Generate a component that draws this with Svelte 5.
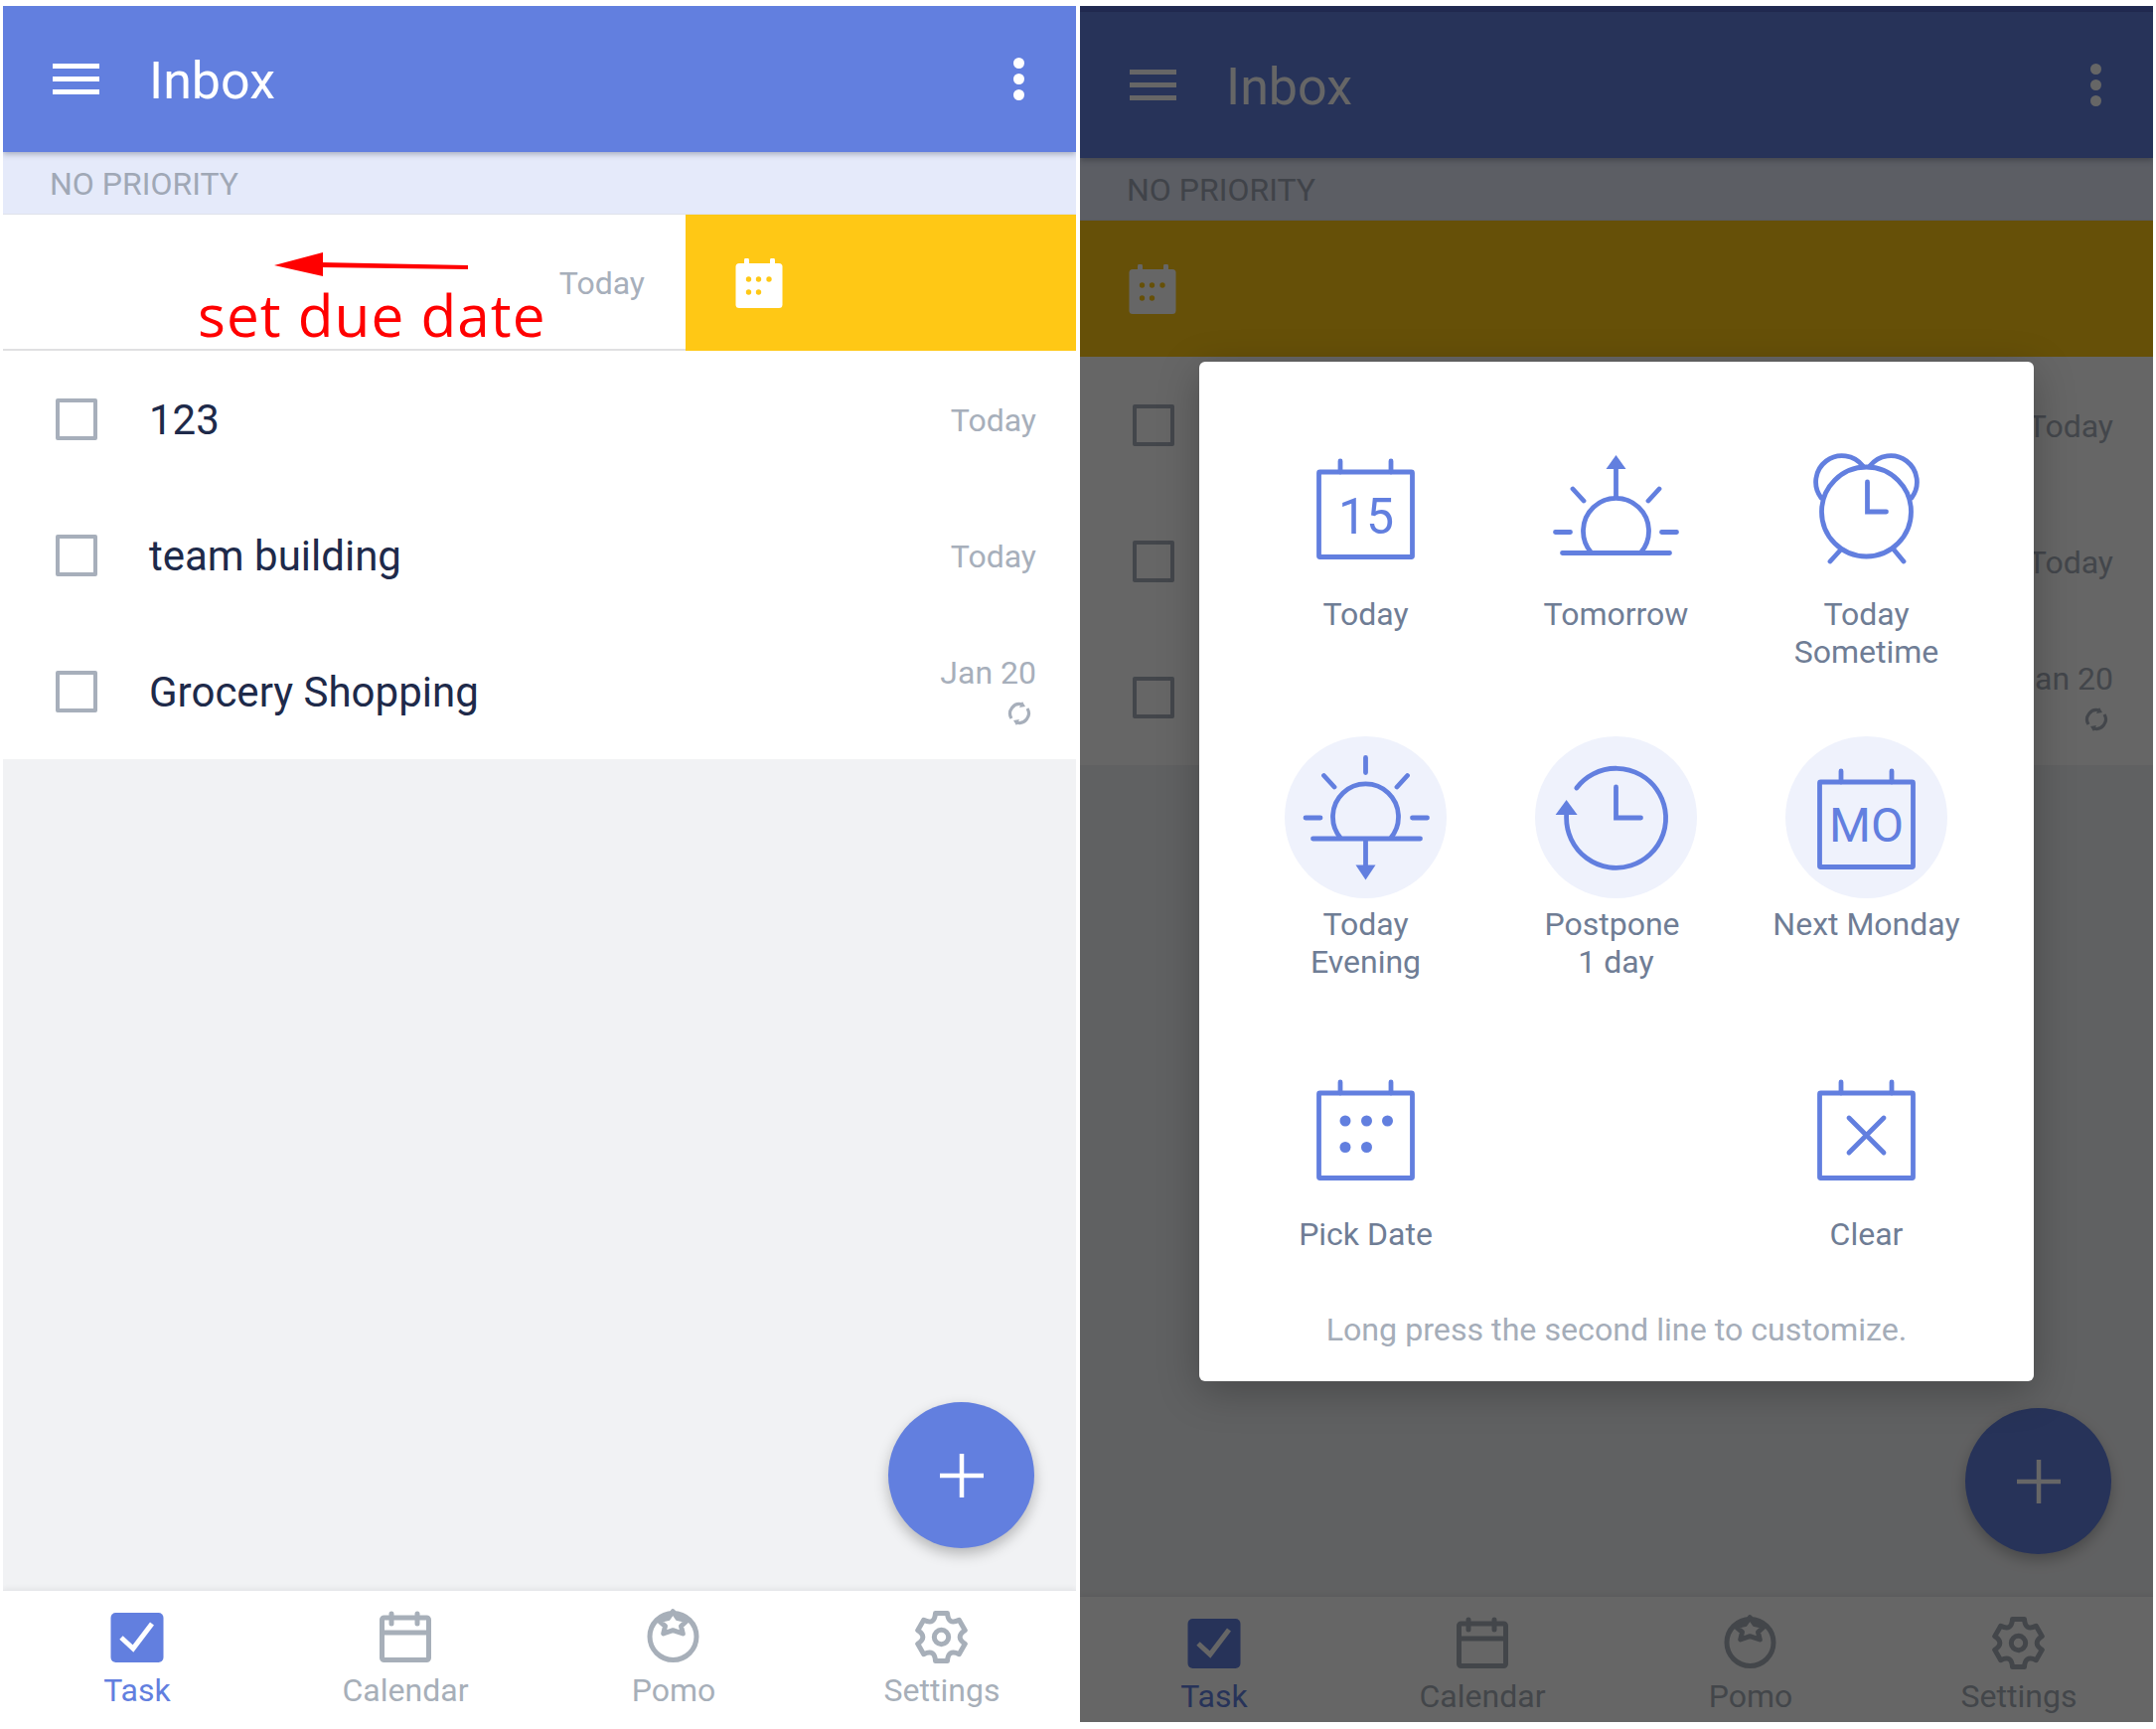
<script lang="ts">
  const tasks = [
    { name: '123', date: 'Today', repeat: false },
    { name: 'team building', date: 'Today', repeat: false },
    { name: 'Grocery Shopping', date: 'Jan 20', repeat: true },
  ]
  const tabs = ['Task', 'Calendar', 'Pomo', 'Settings']
  const options = [
    { id: 'today', lines: ['Today'] },
    { id: 'tomorrow', lines: ['Tomorrow'] },
    { id: 'sometime', lines: ['Today', 'Sometime'] },
    { id: 'evening', lines: ['Today', 'Evening'], ring: true },
    { id: 'postpone', lines: ['Postpone ', '1 day'], ring: true },
    { id: 'monday', lines: ['Next Monday'], ring: true },
    { id: 'pick', lines: ['Pick Date'] },
    { id: 'none', lines: [] },
    { id: 'clear', lines: ['Clear'] },
  ]

  // six rounded teeth around the settings cog
  function gearPath(cx: number, cy: number) {
    const pt = (deg: number, r: number) => {
      const a = (deg * Math.PI) / 180
      return `${(cx + r * Math.cos(a)).toFixed(1)} ${(cy + r * Math.sin(a)).toFixed(1)}`
    }
    let d = ''
    for (let i = 0; i < 6; i++) {
      const a = -90 + i * 60
      d += `${i ? 'L' : 'M'}${pt(a - 14, 24.8)} L${pt(a + 14, 24.8)} Q${pt(a + 30, 13.5)} ${pt(a + 46, 24.8)} `
    }
    return d + 'Z'
  }
</script>

{#snippet calFrame()}
  <rect x="34.5" y="46" width="94" height="85.5" rx="1" />
  <path d="M56 35v11M107 35v11" />
{/snippet}

{#snippet dialogIcon(id: string)}
  <svg class="opt-svg" viewBox="0 0 163 163" width="163" height="163">
    {#if id === 'today'}
      {@render calFrame()}
      <text class="cal-num" x="82" y="107.5">15</text>
    {:else if id === 'tomorrow'}
      <path d="M27.5 127.5h108M56.5 127A33 33 0 1 1 106.5 127M81.5 72V40M20.5 106.5h15M127.5 106.5h15M38 63l11 12M125 63l-11 12" />
      <path class="solid" d="M81.5 29l10 14h-20z" />
    {:else if id === 'sometime'}
      <circle cx="81.5" cy="86" r="45" />
      <path d="M36 72A26 26 0 0 1 78 40M127 72A26 26 0 0 0 85 40M55 125L45 136M109 124l10 12M82.5 56v30h19" />
    {:else if id === 'evening'}
      <path d="M28.5 103h108M56.5 102.5A33 33 0 1 1 106.5 102.5M81.5 21.5v15M81.5 103v28M21 82h15M128.5 82h15M39.5 39.5L50 51M123.5 39.5L113 51" />
      <path class="solid" d="M71.5 129.5h20l-10 15z" />
    {:else if id === 'postpone'}
      <path d="M41.8 52A50 50 0 1 1 31.6 82v-5M81.5 51v31h25" />
      <path class="solid" d="M31.6 64l11 15h-22z" />
    {:else if id === 'monday'}
      {@render calFrame()}
      <text class="cal-num mo" x="81.5" y="106">MO</text>
    {:else if id === 'pick'}
      {@render calFrame()}
      <g class="solid">
        <circle cx="61" cy="74" r="5.5" /><circle cx="82.5" cy="74" r="5.5" /><circle cx="103.5" cy="74" r="5.5" />
        <circle cx="61" cy="100.5" r="5.5" /><circle cx="82.5" cy="100.5" r="5.5" />
      </g>
    {:else if id === 'clear'}
      {@render calFrame()}
      <path d="M64 71l35 35M99 71l-35 35" />
    {/if}
  </svg>
{/snippet}

{#snippet tabIcon(name: string)}
  <svg class="tab-svg" viewBox="0 -4 54 58" width="54" height="58">
    {#if name === 'Task'}
      <rect class="task-box" x="0.5" y="2" width="53" height="50" rx="5" />
      <path class="task-check" d="M11 27l12 11 19-25" />
    {:else if name === 'Calendar'}
      <rect x="3.5" y="7" width="47" height="42.5" rx="2" />
      <path d="M3.5 22h47M13 3v10M39 3v10" />
    {:else if name === 'Pomo'}
      <circle cx="26.5" cy="26" r="23.5" />
      <path class="star" d="M26.3 0.7L31 7.5L40.7 9.7L34.5 15.5L36.3 23L26.3 19.7L16.7 23L18.5 15.5L11.7 9.7L21.5 7.5Z" />
    {:else}
      <path d={gearPath(26.5, 26.5)} />
      <circle cx="26.5" cy="26.5" r="7.2" />
    {/if}
  </svg>
{/snippet}

{#snippet screen(dim: boolean)}
  <section class="screen" class:dim>
    {#if dim}<div class="status"></div>{/if}
    <header class="bar">
      <div class="burger"><span></span><span></span><span></span></div>
      <h1>Inbox</h1>
      <div class="dots"><span></span><span></span><span></span></div>
    </header>
    <div class="section-head">NO PRIORITY</div>

    <div class="swipe-row">
      {#if !dim}
        <div class="swipe-rest">
          <span class="date">Today</span>
          <svg class="annot-arrow" viewBox="0 0 200 30" width="200" height="30">
            <path d="M0 13L49 0V24Z" fill="#ff0000" />
            <path d="M45 10L195 13V17L45 15Z" fill="#ff0000" />
          </svg>
          <span class="annot-text">set due date</span>
        </div>
      {/if}
      <div class="swipe-action">
        <svg viewBox="0 0 48 50" width="48" height="50">
          <path class="tick" d="M11.5 2v8M37.5 2v8" />
          <rect x="0.5" y="5" width="47" height="45" rx="3.5" fill="#fff" />
          <g fill="#ffc815">
            <circle cx="13.5" cy="21" r="2.7" /><circle cx="23.5" cy="21" r="2.7" /><circle cx="34" cy="21" r="2.7" />
            <circle cx="13.5" cy="34" r="2.7" /><circle cx="23.5" cy="34" r="2.7" />
          </g>
        </svg>
      </div>
    </div>

    <main class="list">
      {#each tasks as t}
        <div class="row">
          <span class="check"></span>
          <span class="name">{t.name}</span>
          <div class="meta" class:two={t.repeat}>
            <span class="date">{t.date}</span>
            {#if t.repeat}
              <svg class="repeat" viewBox="0 0 24 24" width="24" height="24">
                <path d="M4 17A9.5 9.5 0 0 1 15 3M20 7A9.5 9.5 0 0 1 9 21" />
                <path class="repeat-head" d="M15 0l3 5-6 1zM9 24l-3-5 6-1z" />
              </svg>
            {/if}
          </div>
        </div>
      {/each}
      <button class="fab" aria-label="Add task">
        <svg viewBox="0 0 44 44" width="44" height="44"><path d="M22 0v44M0 22h44" /></svg>
      </button>
    </main>

    <nav class="tabs">
      {#each tabs as tab, i}
        <div class="tab" class:active={i === 0}>
          {@render tabIcon(tab)}
          <span>{tab}</span>
        </div>
      {/each}
    </nav>

    {#if dim}
      <div class="scrim"></div>
      <div class="dialog">
        <div class="grid">
          {#each options as o}
            <div class="opt">
              {#if o.lines.length}
                <div class="opt-icon" class:ring={o.ring}>{@render dialogIcon(o.id)}</div>
                <div class="opt-label">
                  {#each o.lines as line}<div class="line">{line}</div>{/each}
                </div>
              {/if}
            </div>
          {/each}
        </div>
        <p class="hint">Long press the second line to customize.</p>
      </div>
    {/if}
  </section>
{/snippet}

<div class="page">
  {@render screen(false)}
  {@render screen(true)}
</div>

<style>
  :global(body) { margin: 0; background: #fff; }
  .page {
    display: flex; gap: 4px; padding: 6px 3px 0; height: 1740px; box-sizing: border-box;
    font-family: Roboto, "Liberation Sans", sans-serif;
  }
  .screen {
    position: relative; width: 1080px; height: 1728px; overflow: hidden;
    display: flex; flex-direction: column; background: #f1f2f4;
  }
  .screen.dim { height: 1727px; }
  .status { height: 6px; background: #556bcd; flex-shrink: 0; }

  .bar {
    position: relative; z-index: 1; height: 147px; flex-shrink: 0; display: flex; align-items: center;
    padding: 0 52px 0 50px; background: #627fdf; color: #fff;
    box-shadow: 0 2px 6px rgba(40, 45, 70, .35);
  }
  .burger { display: flex; flex-direction: column; gap: 8px; width: 47px; }
  .burger span { height: 5px; background: #fff; }
  h1 { flex: 1; margin: 4px 0 0 50px; font-size: 52px; font-weight: 400; line-height: 60px; }
  .dots { display: flex; flex-direction: column; gap: 5px; }
  .dots span { width: 11px; height: 11px; border-radius: 50%; background: #fff; }

  .section-head {
    height: 63px; flex-shrink: 0; display: flex; align-items: center; padding: 2px 0 0 47px; box-sizing: border-box;
    background: #e5eafa; border-bottom: 1px solid #dfe2ea;
    font-size: 32px; color: #a0a8b6;
  }

  .swipe-row { display: flex; height: 137px; flex-shrink: 0; }
  .swipe-rest {
    position: relative; width: 687px; box-sizing: border-box; padding: 3px 41px 0 0;
    display: flex; align-items: center; justify-content: flex-end;
    background: #fff; border-bottom: 2px solid #e0e0e2;
  }
  .swipe-action { flex: 1; display: flex; align-items: center; padding-left: 50px; background: #ffc815; height: 137px; }
  .dim .swipe-action { padding-left: 49px; }
  .tick { stroke: #fff; stroke-width: 5; stroke-linecap: round; fill: none; }
  .annot-arrow { position: absolute; left: 273px; top: 38px; }
  .annot-text {
    position: absolute; left: 196px; top: 60px; font-family: "Open Sans", sans-serif;
    font-size: 58.5px; line-height: 80px; letter-spacing: 1px; color: #ff0000;
  }

  .list { position: relative; flex: 1; }
  .row {
    display: flex; align-items: center; height: 137px; padding: 0 40px 0 53px;
    background: #fff;
  }
  .check { width: 42px; height: 42px; box-sizing: border-box; border: 4px solid #a7afbb; border-radius: 2px; margin-right: 52px; }
  .name { flex: 1; padding-top: 2px; font-size: 42px; color: #1e2a4a; }
  .meta { display: flex; flex-direction: column; align-items: flex-end; gap: 10px; margin-top: 3px; }
  .meta.two { margin-top: -3px; }
  .date { font-size: 32px; line-height: 38px; color: #a7afbb; }
  .repeat { margin-right: 5px; }
  .repeat path { fill: none; stroke: #a7afbb; stroke-width: 3.2; }
  .repeat path.repeat-head { fill: #a7afbb; stroke: none; }

  .fab {
    position: absolute; right: 42px; bottom: 42px; width: 147px; height: 147px; padding: 0;
    display: flex; align-items: center; justify-content: center;
    border: 0; border-radius: 50%; background: #627fdf;
    box-shadow: 0 6px 14px rgba(0, 0, 0, .25);
  }
  .fab path { stroke: #fff; stroke-width: 4.5; fill: none; }

  .tabs {
    position: relative; height: 134px; flex-shrink: 0; display: grid; grid-template-columns: repeat(4, 1fr);
    background: #fff; border-top: 1px solid #e6e7ea; box-sizing: border-box;
    box-shadow: 0 -2px 5px rgba(0, 0, 0, .05);
  }
  .dim .tabs { height: 127px; }
  .tab { display: flex; flex-direction: column; align-items: center; padding-top: 16px; font-size: 32px; color: #a7afb9; }
  .tab span { line-height: 38px; margin-top: 7px; }
  .tab.active { color: #627fdf; }
  .tab-svg path, .tab-svg rect, .tab-svg circle { fill: none; stroke: #a7afb9; stroke-width: 5; stroke-linejoin: round; stroke-linecap: round; }
  .tab-svg .task-box { fill: #627fdf; stroke: none; }
  .tab-svg .task-check { stroke: #fff; stroke-width: 5; stroke-linecap: butt; stroke-linejoin: miter; }
  .tab-svg .star { fill: #fff; }

  .scrim { position: absolute; inset: 0; z-index: 2; background: rgba(0, 0, 0, .6); }
  .dialog {
    position: absolute; z-index: 3; left: 120px; top: 358px; width: 840px; height: 1026px;
    box-sizing: border-box; padding: 64.5px 41.5px 0; background: #fff; border-radius: 6px;
    box-shadow: 0 10px 40px rgba(0, 0, 0, .25);
  }
  .grid { display: grid; grid-template-columns: repeat(3, 252px); grid-auto-rows: 248px; row-gap: 64.5px; }
  .opt { display: flex; flex-direction: column; align-items: center; text-align: center; }
  .opt-icon { width: 163px; height: 163px; border-radius: 50%; }
  .opt-icon.ring { background: #eff2fc; }
  .opt-svg { display: block; }
  .opt-svg path, .opt-svg rect, .opt-svg circle { fill: none; stroke: #627fdf; stroke-width: 4.8; stroke-linecap: round; }
  .opt-svg .solid, .opt-svg .solid circle { fill: #627fdf; stroke: none; }
  .cal-num { font-size: 50px; fill: #627fdf; text-anchor: middle; font-family: Roboto, sans-serif; }
  .cal-num.mo { font-size: 48px; }
  .opt-label { margin-top: 7px; font-size: 32px; line-height: 38px; color: #6f7d95; }
  .opt:nth-child(n + 7) .opt-label { margin-top: 6px; }
  .line { white-space: pre; }
  .hint { margin: 17px 0 0; text-align: center; font-size: 32.2px; line-height: 38px; color: #a5adb9; }
</style>
